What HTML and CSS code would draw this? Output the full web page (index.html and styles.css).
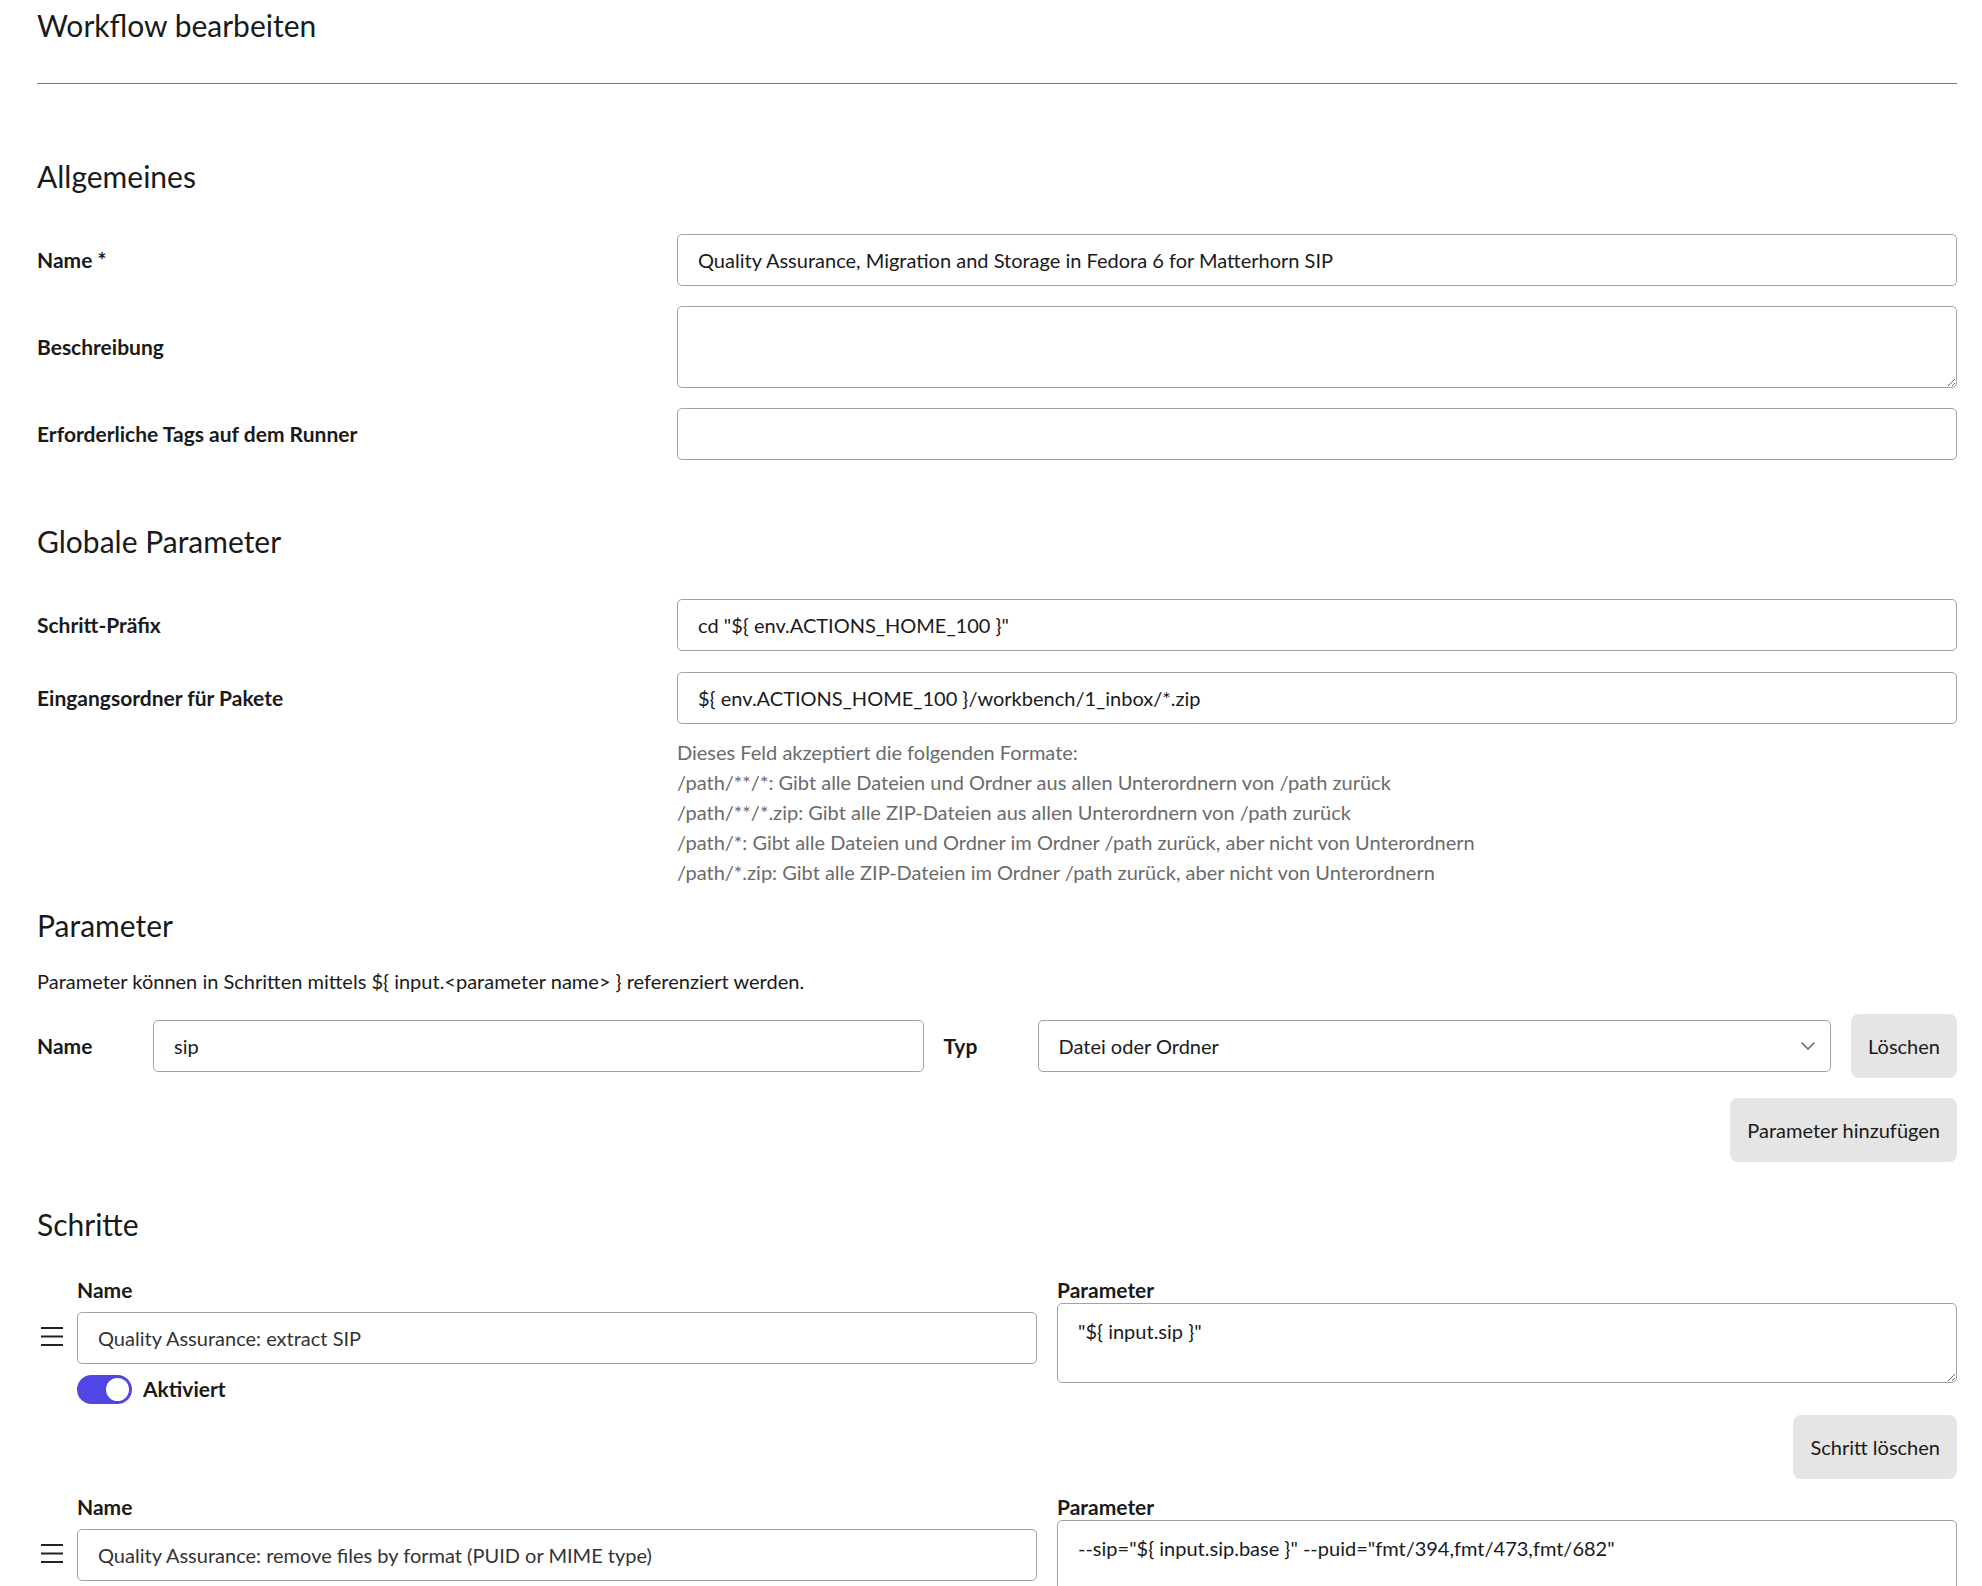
FILE: index.html
```html
<!DOCTYPE html>
<html lang="de">
<head>
    <meta charset="UTF-8">
    <meta name="viewport" content="width=device-width, initial-scale=1.0">
    <title>Workflow bearbeiten</title>
    <link rel="stylesheet" href="styles.css">
</head>
<body>
    <div class="page">
        <header class="page-header">
            <h1 class="page-title">Workflow bearbeiten</h1>
        </header>

        <h2 class="section-title section-first">Allgemeines</h2>
        <div class="form-row row-first">
            <label class="form-label" for="wfName">Name *</label>
            <input class="form-control" id="wfName" type="text" value="Quality Assurance, Migration and Storage in Fedora 6 for Matterhorn SIP">
        </div>
        <div class="form-row">
            <label class="form-label" for="wfDesc">Beschreibung</label>
            <textarea class="form-control form-textarea" id="wfDesc"></textarea>
        </div>
        <div class="form-row">
            <label class="form-label" for="wfTags">Erforderliche Tags auf dem Runner</label>
            <input class="form-control" id="wfTags" type="text" value="">
        </div>

        <h2 class="section-title">Globale Parameter</h2>
        <div class="form-row row-first">
            <label class="form-label" for="wfPrefix">Schritt-Präfix</label>
            <input class="form-control" id="wfPrefix" type="text" value='cd "${ env.ACTIONS_HOME_100 }"'>
        </div>
        <div class="form-row row-tight">
            <label class="form-label" for="wfInbox">Eingangsordner für Pakete</label>
            <input class="form-control" id="wfInbox" type="text" value="${ env.ACTIONS_HOME_100 }/workbench/1_inbox/*.zip">
        </div>
        <div class="form-help">
            <div>Dieses Feld akzeptiert die folgenden Formate:</div>
            <div>/path/**/*: Gibt alle Dateien und Ordner aus allen Unterordnern von /path zurück</div>
            <div>/path/**/*.zip: Gibt alle ZIP-Dateien aus allen Unterordnern von /path zurück</div>
            <div>/path/*: Gibt alle Dateien und Ordner im Ordner /path zurück, aber nicht von Unterordnern</div>
            <div>/path/*.zip: Gibt alle ZIP-Dateien im Ordner /path zurück, aber nicht von Unterordnern</div>
        </div>

        <h2 class="section-title section-params">Parameter</h2>
        <p class="section-note">Parameter können in Schritten mittels ${ input.&lt;parameter name&gt; } referenziert werden.</p>
        <div class="param-row">
            <label class="form-label" for="paramName">Name</label>
            <input class="form-control" id="paramName" type="text" value="sip">
            <label class="form-label" for="paramType">Typ</label>
            <div class="select-wrap">
                <select class="form-control form-select" id="paramType">
                    <option>Datei oder Ordner</option>
                    <option>Text</option>
                </select>
                <svg class="select-chevron" width="14" height="8" viewBox="0 0 14 8" fill="none" stroke="#666" stroke-width="1.5" stroke-linecap="round" stroke-linejoin="round">
                    <path d="M1 1l6 6 6-6"></path>
                </svg>
            </div>
            <button class="btn" type="button">Löschen</button>
        </div>
        <div class="actions">
            <button class="btn" type="button">Parameter hinzufügen</button>
        </div>

        <h2 class="section-title section-steps">Schritte</h2>

        <div class="step step-first">
            <div class="step-handle">
                <svg width="24" height="24" viewBox="0 0 24 24" fill="none" stroke="#222" stroke-width="2">
                    <path d="M1 4h22M1 12.5h22M1 21h22"></path>
                </svg>
            </div>
            <div class="step-name">
                <label class="step-label">Name</label>
                <input class="form-control step-input" type="text" value="Quality Assurance: extract SIP">
                <label class="step-toggle">
                    <input class="toggle-input" type="checkbox" checked>
                    <span class="switch"><span class="knob"></span></span>
                    <span class="toggle-label">Aktiviert</span>
                </label>
            </div>
            <div class="step-params">
                <label class="step-label">Parameter</label>
                <textarea class="form-control step-textarea">"${ input.sip }"</textarea>
            </div>
        </div>
        <div class="actions step-actions">
            <button class="btn" type="button">Schritt löschen</button>
        </div>

        <div class="step step-next">
            <div class="step-handle">
                <svg width="24" height="24" viewBox="0 0 24 24" fill="none" stroke="#222" stroke-width="2">
                    <path d="M1 4h22M1 12.5h22M1 21h22"></path>
                </svg>
            </div>
            <div class="step-name">
                <label class="step-label">Name</label>
                <input class="form-control step-input" type="text" value="Quality Assurance: remove files by format (PUID or MIME type)">
                <label class="step-toggle">
                    <input class="toggle-input" type="checkbox" checked>
                    <span class="switch"><span class="knob"></span></span>
                    <span class="toggle-label">Aktiviert</span>
                </label>
            </div>
            <div class="step-params">
                <label class="step-label">Parameter</label>
                <textarea class="form-control step-textarea">--sip="${ input.sip.base }" --puid="fmt/394,fmt/473,fmt/682"</textarea>
            </div>
        </div>
    </div>
</body>
</html>
```

FILE: styles.css
```css
:root {
    --text-color: #1a1a1a;
    --muted-color: #6b6b6b;
    --border-color: #a3a3a3;
    --button-bg: #e5e5e5;
    --accent-color: #4f46e5;
}

* {
    box-sizing: border-box;
}

body {
    margin: 0;
    font-family: Lato, "Noto Sans", sans-serif;
    font-size: 20px;
    line-height: 1.5;
    color: var(--text-color);
    background: #ffffff;
}

.page {
    padding: 0 25px 40px 37px;
}

.page-header {
    padding: 8px 0 41px;
    border-bottom: 1px solid #7a7a7a;
}

.page-title,
.section-title {
    margin: 0;
    font-size: 30px;
    font-weight: 400;
    line-height: 34px;
}

.section-title {
    margin-top: 64px;
}

.section-first {
    margin-top: 75px;
}

.section-params {
    margin-top: 21px;
}

.section-steps {
    margin-top: 45px;
}

.form-row {
    display: grid;
    grid-template-columns: 1fr 2fr;
    align-items: center;
    margin-top: 20px;
}

.form-row.row-first {
    margin-top: 41px;
}

.form-row.row-tight {
    margin-top: 21px;
}

.form-label {
    font-size: 21px;
    font-weight: 700;
}

.form-control {
    display: block;
    width: 100%;
    height: 52px;
    padding: 0 20px;
    border: 1px solid var(--border-color);
    border-radius: 5px;
    background: #ffffff;
    font: inherit;
    color: var(--text-color);
}

.form-textarea {
    height: 82px;
    padding: 12px 20px;
}

.form-help {
    margin-top: 13px;
    margin-left: calc(100% / 3);
    color: var(--muted-color);
}

.section-note {
    margin: 24px 0 0;
}

.param-row {
    display: grid;
    grid-template-columns: 96px 770fr 74px 793fr auto;
    column-gap: 20px;
    align-items: center;
    margin-top: 18px;
}

.select-wrap {
    position: relative;
}

.form-select {
    appearance: none;
    -webkit-appearance: none;
}

.select-chevron {
    position: absolute;
    right: 16px;
    top: 50%;
    transform: translateY(-50%);
    pointer-events: none;
}

.btn {
    padding: 17px;
    border: none;
    border-radius: 8px;
    background: var(--button-bg);
    font: inherit;
    line-height: 30px;
    color: var(--text-color);
    cursor: pointer;
}

.actions {
    display: flex;
    justify-content: flex-end;
    margin-top: 20px;
}

.step {
    display: flex;
    align-items: flex-start;
}

.step-first {
    margin-top: 36px;
}

.step-next {
    margin-top: 15px;
}

.step-handle {
    width: 40px;
    padding: 47px 0 0 3px;
}

.step-handle svg {
    display: block;
}

.step-name {
    width: 960px;
}

.step-params {
    flex: 1;
    margin-left: 20px;
}

.step-label {
    display: block;
    font-size: 21px;
    font-weight: 700;
    line-height: 26px;
}

.step-input {
    margin-top: 9px;
    color: #333333;
}

.step-textarea {
    height: 80px;
    padding: 12px 20px;
}

.step-toggle {
    display: flex;
    align-items: center;
    gap: 11px;
    margin-top: 10px;
    cursor: pointer;
}

.toggle-input {
    display: none;
}

.switch {
    display: flex;
    justify-content: flex-end;
    align-items: center;
    width: 55px;
    height: 29px;
    padding: 3px;
    border-radius: 15px;
    background: #cccccc;
}

.toggle-input:checked + .switch {
    background: var(--accent-color);
}

.toggle-input:not(:checked) + .switch {
    justify-content: flex-start;
}

.knob {
    width: 23px;
    height: 23px;
    border-radius: 50%;
    background: #ffffff;
}

.toggle-label {
    font-size: 21px;
    font-weight: 700;
    line-height: 30px;
}

.step-actions {
    margin-top: 11px;
}
```
